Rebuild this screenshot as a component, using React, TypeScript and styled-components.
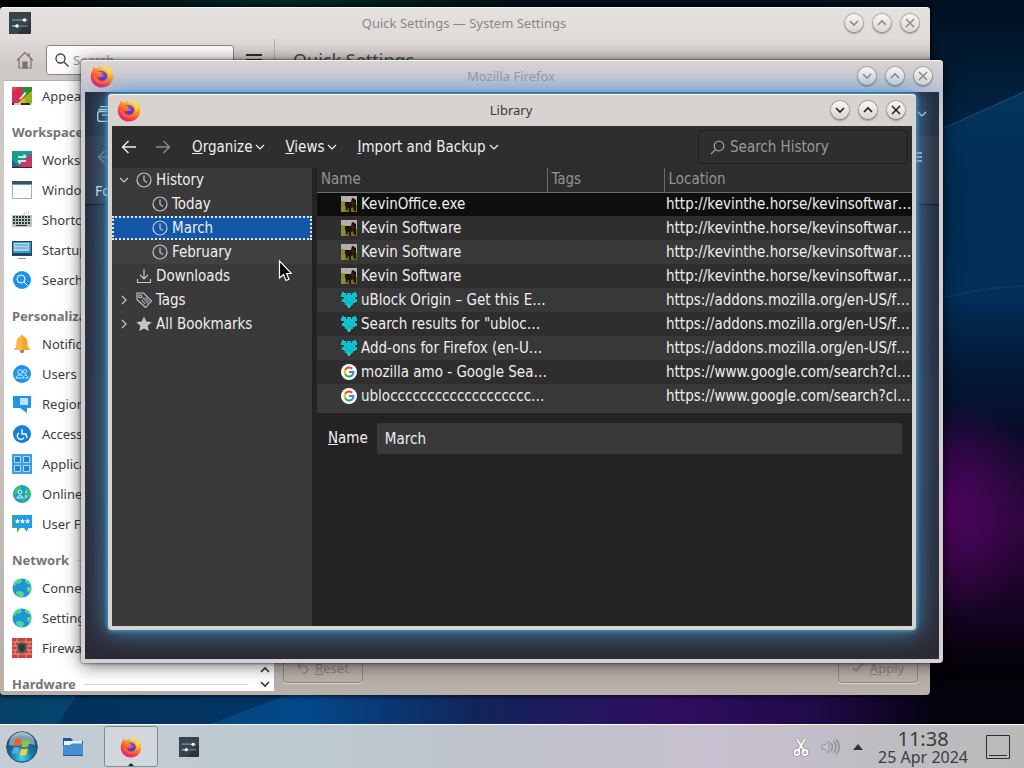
import React from 'react';
import styled, { createGlobalStyle } from 'styled-components';

const GlobalStyle = createGlobalStyle`
  * {
    box-sizing: border-box;
  }

  body {
    margin: 0;
    font-family: 'Noto Sans', sans-serif;
    font-size: 13px;
    background: #000;
  }

  button,
  input {
    font: inherit;
    color: inherit;
    border: 0;
    padding: 0;
    background: none;
  }

  svg {
    display: block;
    flex: none;
  }
`;

const Desktop = styled.div`
  display: flex;
  flex-direction: column;
  min-height: 100vh;
  position: relative;
  overflow: hidden;
`;

const WallpaperSvg = styled.svg`
  position: absolute;
  inset: 0;
  width: 100%;
  height: 100%;
`;

const Workspace = styled.main`
  flex: 1;
  position: relative;
`;

/* windows */

const Frame = styled.section`
  position: absolute;
  display: flex;
  flex-direction: column;
  padding: 0 4px 4px;
  border-radius: 4px;
`;

const SettingsFrame = styled(Frame)`
  inset: 7px 94px 29px 0;
  background: linear-gradient(#e4e1de, #e0dcda 30px, #cfc9c6 60px, #cdc6c2 50%, #b8afa9);
  box-shadow: 0 0 6px #000, inset 0 1px 0 #f6f4f3;
`;

const FirefoxFrame = styled(Frame)`
  inset: 60px 81px 61px 81px;
  background: linear-gradient(#dad5d3, #d2ccd2 14px, #b9c0d6 32px, #d4d0d0 60px, #d6cfd6);
  box-shadow: 0 0 3px rgba(0, 0, 0, 0.8), 0 2px 18px rgba(0, 0, 0, 0.6), inset 0 1px 0 #f6f4f3;
`;

const LibraryFrame = styled(Frame)`
  inset: 94px 108px 94px 108px;
  background: #d6d3d0;
  box-shadow: 0 0 4px 1px #4b9bc8, 0 0 24px 3px rgba(66, 150, 205, 0.8),
    inset 0 1px 0 #fbfaf9;
`;

const TitleBar = styled.header`
  display: grid;
  grid-template-columns: 1fr auto 1fr;
  align-items: center;
  height: 32px;
  flex: none;
  padding: 0 7px 0 5px;
`;

const WindowTitle = styled.h1<{ $tone: string }>`
  margin: 0;
  font-size: 13px;
  font-weight: 400;
  line-height: 20px;
  color: ${(p) => p.$tone};
`;

const WindowButtons = styled.div`
  display: flex;
  gap: 10px;
  justify-content: flex-end;
`;

const WindowButton = styled.button<{ $active?: boolean }>`
  width: 18px;
  height: 18px;
  border-radius: 50%;
  display: flex;
  align-items: center;
  justify-content: center;
  color: ${(p) => (p.$active ? '#1d1d1d' : '#8e8a88')};
  background: linear-gradient(#f8f7f6, #d9d6d3);
  box-shadow: 0 0 1px 1px rgba(110, 105, 102, 0.5), 0 2px 2px rgba(0, 0, 0, 0.25);
`;

/* system settings */

const SettingsBody = styled.div`
  display: grid;
  grid-template-columns: 270px 1fr;
  flex: 1;
  min-height: 0;
`;

const SettingsSide = styled.div`
  display: flex;
  flex-direction: column;
  min-width: 0;
  min-height: 0;
`;

const SettingsToolbar = styled.div`
  display: flex;
  align-items: center;
  height: 42px;
  flex: none;
  padding: 0 12px;
  gap: 12px;
  border-bottom: 1px solid #b5afab;
  color: #3b3b3b;
`;

const SearchBox = styled.label`
  display: flex;
  align-items: center;
  gap: 4px;
  flex: 1;
  min-width: 0;
  height: 30px;
  padding: 0 8px;
  border: 1px solid #8b8683;
  border-radius: 3px;
  background: #fcfcfc;

  input {
    flex: 1;
    min-width: 0;
    outline: 0;
  }

  input::placeholder {
    color: #9a9896;
    opacity: 1;
  }
`;

const IconButton = styled.button`
  display: flex;
  align-items: center;
  justify-content: center;
`;

const CategoryPane = styled.div`
  display: flex;
  flex: 1;
  min-height: 0;
  background: #fff;
`;

const CategoryList = styled.nav`
  flex: 1;
  overflow: hidden;
  padding: 0 8px;
  color: #3a3d3f;

  a {
    display: flex;
    align-items: center;
    gap: 10px;
    height: 30px;
    color: inherit;
    text-decoration: none;
    white-space: nowrap;
  }
`;

const CategoryHeading = styled.h2`
  display: flex;
  align-items: center;
  gap: 8px;
  margin: 0;
  height: 34px;
  padding-top: 8px;
  font-size: 13px;
  font-weight: 700;
  color: #757575;

  &::after {
    content: '';
    flex: 1;
    height: 1px;
    background: #d9d9d9;
  }
`;

const ScrollButtons = styled.div`
  display: flex;
  flex-direction: column;
  justify-content: flex-end;
  width: 18px;
  color: #333;

  button {
    height: 14px;
    display: flex;
    align-items: center;
    justify-content: center;
  }
`;

const SettingsContent = styled.div`
  display: flex;
  flex-direction: column;
  justify-content: space-between;
  border-left: 1px solid #b5afab;

  h2 {
    margin: 0;
    padding: 7px 18px;
    font-size: 18px;
    font-weight: 400;
    line-height: 28px;
    color: #4a4a4a;
  }
`;

const SettingsActions = styled.div`
  display: flex;
  justify-content: space-between;
  padding: 8px;
`;

const ActionButton = styled.button`
  display: flex;
  align-items: center;
  justify-content: center;
  gap: 6px;
  width: 80px;
  height: 30px;
  border: 1px solid #8f8883;
  border-radius: 4px;
  box-shadow: 0 1px 0 #ddd8d4;
  color: #8d8681;
`;

/* firefox main window */

const FirefoxBody = styled.div`
  flex: 1;
  background: linear-gradient(#262b3a, #2c2f3f 60%, #2c2a33);
  color: #d4e8f4;
  font-size: 14px;
`;

const FirefoxBar = styled.div<{ $height: number; $light?: boolean }>`
  display: flex;
  align-items: center;
  justify-content: space-between;
  height: ${(p) => p.$height}px;
  padding: 0 12px;
  background: ${(p) => (p.$light ? '#31323f' : 'transparent')};

  svg:first-child {
    opacity: ${(p) => (p.$light ? 0.4 : 1)};
  }
`;

const BookmarkBar = styled(FirefoxBar)`
  padding: 0 10px;
  border-bottom: 1px solid #0c0c12;
`;

/* library */

const LibraryBody = styled.div`
  display: flex;
  flex-direction: column;
  flex: 1;
  min-height: 0;
  background: #232323;
  color: #efefef;
  font-family: 'DejaVu Sans Condensed', 'DejaVu Sans', sans-serif;
  font-size: 15px;
  line-height: 21px;
`;

const LibraryToolbar = styled.div`
  display: flex;
  align-items: center;
  height: 42px;
  flex: none;
  padding-right: 4px;
  background: #2e2e2e;
`;

const NavButton = styled(IconButton)`
  width: 34px;
  height: 34px;

  &:disabled {
    color: #8b8b8b;
  }
`;

const MenuGroup = styled.div`
  display: flex;
  flex: 1;
  padding-left: 2px;
`;

const MenuButton = styled.button`
  display: flex;
  align-items: center;
  gap: 3px;
  padding: 0 10px;
`;

const HistorySearch = styled.label`
  display: flex;
  align-items: center;
  gap: 5px;
  width: 210px;
  height: 34px;
  padding: 0 11px;
  border: 1px solid #1f1f1f;
  border-radius: 4px;
  color: #9b9b9b;

  input {
    flex: 1;
    min-width: 0;
    outline: 0;
  }

  input::placeholder {
    color: #9b9b9b;
    opacity: 1;
  }
`;

const LibraryPanes = styled.div`
  display: grid;
  grid-template-columns: 200px 1fr;
  column-gap: 5px;
  flex: 1;
  min-height: 0;
`;

const Tree = styled.ul`
  margin: 0;
  padding: 0;
  list-style: none;
  background: #3a3a3a;
`;

const TreeRow = styled.li<{ $depth: number; $selected?: boolean; $hover?: boolean }>`
  display: flex;
  align-items: center;
  gap: 4px;
  height: 24px;
  padding-left: ${(p) => 4 + p.$depth * 16}px;
  background: ${(p) => (p.$selected ? '#1457a8' : p.$hover ? '#414141' : 'none')};
  outline: ${(p) => (p.$selected ? '2px dotted #e8e8e0' : 'none')};
  outline-offset: -2px;

  svg {
    color: #c6c6c6;
  }
`;

const Twisty = styled.span`
  display: flex;
  justify-content: center;
  width: 16px;
`;

const ResultPane = styled.div`
  min-width: 0;
`;

const TableWrap = styled.div`
  padding-bottom: 5px;
  background: #383838;
`;

const ResultTable = styled.table`
  width: 100%;
  table-layout: fixed;
  border-collapse: collapse;

  th {
    height: 24px;
    padding: 0 4px;
    text-align: left;
    font-weight: 400;
    color: #949494;
    background: #2d2d2d;
    border-bottom: 1px solid #6a6a6a;
  }

  th + th {
    border-left: 1px solid #6a6a6a;
  }

  td {
    height: 24px;
    padding: 0 0 0 2px;
    white-space: nowrap;
    overflow: hidden;
  }

  tbody tr:nth-child(odd) {
    background: #383838;
  }

  tbody tr:nth-child(even) {
    background: #2e2e2e;
  }

  tbody tr:first-child {
    background: #0e0e0e;
  }
`;

const SiteCell = styled.div`
  display: flex;
  align-items: center;
  gap: 4px;
  padding-left: 22px;
`;

const DetailRow = styled.div`
  display: flex;
  align-items: center;
  gap: 9px;
  padding: 10px 10px 0 11px;

  input {
    flex: 1;
    height: 31px;
    padding: 0 8px;
    border-radius: 2px;
    background: #393939;
  }
`;

/* panel */

const Panel = styled.footer`
  position: relative;
  display: flex;
  align-items: center;
  justify-content: space-between;
  height: 44px;
  padding: 0 14px 0 6px;
  border-top: 1px solid #fff;
  background: linear-gradient(90deg, #c6ccd4, #bccad2 28%, #bfc2cd 50%, #c8c0d0 70%, #bdbcc0 88%, #bababa);
  color: #3b3b40;
`;

const Launchers = styled.div`
  display: flex;
  align-items: center;
  gap: 5px;
`;

const TaskButton = styled.button<{ $active?: boolean }>`
  display: flex;
  align-items: center;
  justify-content: center;
  width: ${(p) => (p.$active ? 54 : 52)}px;
  height: 41px;
  border: ${(p) => (p.$active ? '1px solid #858c93' : '0')};
  border-radius: 3px;
  background: ${(p) => (p.$active ? 'rgba(225, 228, 230, 0.5)' : 'none')};
  position: relative;
`;

const StartButton = styled(IconButton)`
  width: 32px;
  margin-right: 4px;
`;

const ActiveMark = styled.span`
  position: absolute;
  bottom: 0;
  border: 3px solid transparent;
  border-bottom-color: #222;
  border-top: 0;
`;

const Tray = styled.div`
  display: flex;
  align-items: center;
  gap: 10px;
`;

const Clock = styled.time`
  display: flex;
  flex-direction: column;
  align-items: center;
  padding: 2px 8px 0 3px;
  font-size: 16px;
  line-height: 18px;

  b {
    font-size: 20px;
    font-weight: 400;
  }
`;

const Pointer = styled.svg`
  position: absolute;
  left: 278px;
  top: 259px;
`;

/* drawings */

const Wallpaper = () => (
  <WallpaperSvg viewBox="0 0 1024 768" preserveAspectRatio="none" aria-hidden="true">
    <defs>
      <linearGradient id="wpBottom">
        <stop offset="0" stopColor="#064268" />
        <stop offset=".3" stopColor="#04488a" />
        <stop offset=".47" stopColor="#12245a" />
        <stop offset=".65" stopColor="#300e62" />
        <stop offset=".8" stopColor="#200a48" />
        <stop offset=".92" stopColor="#04020c" />
      </linearGradient>
      <linearGradient id="wpSide" x2="0" y2="1">
        <stop offset="0" stopColor="#00101f" />
        <stop offset=".16" stopColor="#022342" />
        <stop offset=".38" stopColor="#02305a" />
        <stop offset=".48" stopColor="#021a36" />
        <stop offset=".56" stopColor="#0a0c2a" />
        <stop offset=".68" stopColor="#2a0638" />
        <stop offset=".8" stopColor="#140420" />
        <stop offset=".88" stopColor="#020106" />
      </linearGradient>
      <radialGradient id="wpPurple">
        <stop offset="0" stopColor="#4e0560" />
        <stop offset="1" stopColor="#4e0560" stopOpacity="0" />
      </radialGradient>
      <linearGradient id="wpTop">
        <stop offset="0" stopColor="#000" />
        <stop offset=".28" stopColor="#002a28" />
        <stop offset=".5" stopColor="#001018" />
        <stop offset="1" stopColor="#00101f" />
      </linearGradient>
      <linearGradient id="wpBeam" x2="0" y2="1">
        <stop offset="0" stopColor="#02365f" />
        <stop offset="1" stopColor="#02305a" stopOpacity="0" />
      </linearGradient>
    </defs>
    <rect width="1024" height="768" fill="#000" />
    <rect width="1024" height="20" fill="url(#wpTop)" />
    <rect x="900" width="124" height="768" fill="url(#wpSide)" />
    <path d="M900 150 1024 92V300H900Z" fill="url(#wpBeam)" />
    <path d="M940 130 1024 92" stroke="#1c5480" strokeWidth="1" />
    <path d="M940 299Q980 288 1024 286" stroke="#0a3a60" strokeWidth="2" fill="none" />
    <ellipse cx="950" cy="510" rx="90" ry="110" fill="url(#wpPurple)" />
    <rect y="680" width="1024" height="60" fill="url(#wpBottom)" />
    <path d="M58 724 80 690H300L210 724Z" fill="#02284e" opacity=".6" />
  </WallpaperSvg>
);

const FirefoxLogo = ({ size }: { size: number }) => (
  <svg width={size} height={size} viewBox="0 0 24 24" aria-hidden="true">
    <defs>
      <linearGradient id="fxBody" x1=".8" y1=".05" x2=".25" y2="1">
        <stop offset="0" stopColor="#fff24a" />
        <stop offset=".35" stopColor="#ffa022" />
        <stop offset=".65" stopColor="#fb4a3a" />
        <stop offset="1" stopColor="#e31587" />
      </linearGradient>
      <radialGradient id="fxCore" cx=".5" cy=".35">
        <stop offset="0" stopColor="#a34cf0" />
        <stop offset="1" stopColor="#4a3ac8" />
      </radialGradient>
    </defs>
    <path
      d="M12 23.5C5.600 23.500.8 18.800.8 12.400.8 9.600 1.600 7.500 3 5.400c0-1.200.1-2.200.6-3 .5 1 1 1.500 1.700 1.900 1-.1 1.700 0 2.600.2C8.700 3 9.800 2.200 11 2c-.6 1-.7 1.800-.5 2.500 2 .1 3.300.8 4.600 1.900C15.500 4 14.700 2 13.800.5c3.700 1.200 5.400 3.300 6.200 5.800.4-.2.500-.7.500-1.200 1.900 2.300 2.800 4.800 2.700 7.700-.2 6.200-5 10.700-11.200 10.700Z"
      fill="url(#fxBody)"
    />
    <path
      d="M8 8c2-1.200 4.700-1.200 6.700-.1 1.800 1 2.700 2.900 2.400 4.800-.4 2.400-2.400 4-4.800 3.900-2.500-.1-4.200-1.700-4.400-3.900 1 .7 2.300.7 3.300.2.800-.5 1.700-.9 2.500-.8-.3-.9-1.300-1.200-2.700-1.200-.5-1.300.2-1.900 1.100-2.500-1.500-.5-2.800-.5-4.100-.4Z"
      fill="url(#fxCore)"
    />
    <path d="M4 11.500c1.200 5 4.300 7.300 8.500 7.200 3.500-.1 6-2 6.800-5.700" stroke="#ff8a2a" strokeWidth="1.500" fill="none" opacity=".7" />
    <path d="M15.500 6.500c3 2 4 5 3 8.500 3-3.500 2.500-7.500.5-10.500Z" fill="#ffe14a" opacity=".8" />
  </svg>
);

const SlidersIcon = ({ size }: { size: number }) => (
  <svg width={size} height={size} viewBox="0 0 22 22" aria-hidden="true">
    <rect width="22" height="22" rx="1" fill="#2b333a" />
    <path d="M0 0h22v8L8 22H0Z" fill="#39434b" />
    <path d="M3 8h16M3 14h16" stroke="#59748a" strokeWidth="1.500" />
    <path d="M3 14h5" stroke="#6fb8ea" strokeWidth="1.500" />
    <path d="M3 8h12" stroke="#6d7f8c" strokeWidth="1.500" />
    <circle cx="15.500" cy="8" r="1.800" fill="#fff" />
    <circle cx="8" cy="14" r="1.800" fill="#fff" />
  </svg>
);

const Chevron = ({ dir = 'down', size = 10, width = 1.2 }: { dir?: 'down' | 'up' | 'right'; size?: number; width?: number }) => {
  const paths = { down: 'M1 3l4 4 4-4', up: 'M1 7l4-4 4 4', right: 'M3 1l4 4-4 4' };
  return (
    <svg width={size} height={size} viewBox="0 0 10 10" fill="none" stroke="currentColor" strokeWidth={width}>
      <path d={paths[dir]} />
    </svg>
  );
};

const CloseIcon = () => (
  <svg width="10" height="10" viewBox="0 0 10 10" stroke="currentColor" strokeWidth="1.500">
    <path d="M1 1l8 8M9 1L1 9" />
  </svg>
);

const ArrowIcon = ({ flip }: { flip?: boolean }) => (
  <svg width="16" height="16" viewBox="0 0 16 16" fill="none" stroke="currentColor" strokeWidth="1.400">
    <path d={flip ? 'M1 8h13.500M8.500 2l6 6-6 6' : 'M15 8H1.500M7.500 2l-6 6 6 6'} />
  </svg>
);

const ClockIcon = () => (
  <svg width="16" height="16" viewBox="0 0 16 16" fill="none" stroke="currentColor" strokeWidth="1.200">
    <circle cx="8" cy="8" r="7" />
    <path d="M8 3.500V8.500l3 2" />
  </svg>
);

const DownloadIcon = () => (
  <svg width="16" height="16" viewBox="0 0 16 16" fill="none" stroke="currentColor" strokeWidth="1.200">
    <path d="M8 1v10M4 7l4 4 4-4M1.500 11v3.500h13V11" />
  </svg>
);

const TagIcon = () => (
  <svg width="16" height="16" viewBox="0 0 16 16" fill="none" stroke="currentColor" strokeWidth="1.100">
    <path d="M1 1h6.500l8 8-6 6.500L1 7.500Z" />
    <circle cx="4.200" cy="4.200" r="1.500" />
    <path d="M6.500 5.500l6 6M5.500 8l4 4M9 5.500l4 4" opacity=".7" />
  </svg>
);

const StarIcon = () => (
  <svg width="16" height="16" viewBox="0 0 16 16" fill="currentColor">
    <path d="M8 .5l2.300 4.900 5.400.7-4 3.700 1 5.300L8 12.500l-4.700 2.600 1-5.300-4-3.700 5.400-.7Z" />
  </svg>
);

const KevinIcon = () => (
  <svg width="16" height="16" viewBox="0 0 16 16">
    <rect width="16" height="16" fill="#b5aeb0" />
    <path d="M0 9h16v7H0Z" fill="#74731a" />
    <path d="M0 5h4v11H0Z" fill="#8d8a3a" />
    <path d="M4 6h6l1-4h1l3 2v11h-2l-1-4-2 1v4H8v-4H7v2H5v-3L4 10Z" fill="#1f1108" />
    <path d="M11 5h2v5h-2Z" fill="#3a1e0e" />
  </svg>
);

const AmoIcon = () => (
  <svg width="16" height="16" viewBox="0 0 16 16" fill="#0bc3d1">
    <path d="M1 0h2v1h2v2h1V1h4v2h1V1h2V0h2v2h1v3h-2v2h2v3h-2v1h-2v2h-2v2H9v1H7v-1H6v-2H4v-2H3v-1H1V7h2V5H0V2h1Z" />
    <path d="M4 7h1v1H4ZM11 7h1v1h-1ZM6 10h1v1H6ZM9 10h1v1H9Z" fill="#1b8a8c" />
    <path d="M7 12h2v4H7Z" fill="#19d9a0" />
  </svg>
);

const GoogleIcon = () => (
  <svg width="16" height="16" viewBox="0 0 16 16" fill="none" strokeWidth="2.100">
    <circle cx="8" cy="8" r="8" fill="#fff" />
    <path d="M11.200 4.800A4.400 4.400 0 0 0 4.200 5.800" stroke="#ea4335" />
    <path d="M4.200 5.800a4.400 4.400 0 0 0 0 4.400" stroke="#fbbc05" />
    <path d="M4.200 10.200a4.400 4.400 0 0 0 6.800 1.200" stroke="#34a853" />
    <path d="M11 11.400A4.400 4.400 0 0 0 12.400 8H8" stroke="#4285f4" />
  </svg>
);

const categoryDrawings: Record<string, React.ReactNode> = {
  appearance: (
    <>
      <path d="M0 1h20v16H0Z" fill="#d92a55" />
      <path d="M0 1h6l-6 6Z" fill="#e0484a" />
      <path d="M10 1h10v9H10Z" fill="#2c8a3c" />
      <path d="M20 5v12H6Z" fill="#e8b800" />
      <path d="M13 10l7-3v10h-7Z" fill="#8fb51c" />
      <path d="M0 17h20v2H0Z" fill="#c9cbcc" />
      <path d="M0 17h2v2H0ZM9 17h9v2H9Z" fill="#2a2d30" />
      <path d="M7 13l6-7 1.500 1L9 13.500Z" fill="#fff" />
    </>
  ),
  workspace: (
    <>
      <path d="M0 1h20v16H0Z" fill="#159e8c" />
      <path d="M20 3v14H5Z" fill="#c9356c" />
      <path d="M0 10l8 7H0Z" fill="#2a5f8c" />
      <path d="M0 17h20v1H0Z" fill="#2a2d30" />
      <path d="M6 7h8M11.500 4.500 14 7M14 11H6M8.500 13.500 6 11" stroke="#fff" strokeWidth="1.300" />
    </>
  ),
  window: (
    <>
      <path d="M.5 1.500h19v17H.5Z" fill="#fcfcfc" stroke="#a8abae" />
      <path d="M0 1h20v3H0Z" fill="#475057" />
      <path d="M0 4h20v1H0Z" fill="#3daee9" />
    </>
  ),
  keyboard: (
    <>
      <path d="M0 5h20v12H0Z" fill="#b9c4bc" />
      <path d="M1 7h18M1 10h18M1 13h18" stroke="#2c3a36" strokeWidth="2" strokeDasharray="2 1" />
      <path d="M4 15.500h11" stroke="#2c3a36" />
      <path d="M12 5V3h6" stroke="#9aa29c" strokeDasharray="1 1" />
    </>
  ),
  startup: (
    <>
      <path d="M0 1h20v15H0Z" fill="#27445a" />
      <path d="M1 2h18v11H1Z" fill="#2f9fd4" />
      <path d="M2 3h15v8H2Z" fill="#a9d6ec" />
      <path d="M3 5h13M3 8h13" stroke="#5d95b3" />
      <path d="M6 18h8v1H6Z" fill="#8e9499" />
    </>
  ),
  search: (
    <>
      <circle cx="10" cy="10" r="9" fill="#1e93e8" />
      <circle cx="9" cy="9" r="4" stroke="#fff" />
      <path d="M12 12l4 4" stroke="#fff" />
    </>
  ),
  bell: (
    <>
      <circle cx="10" cy="17" r="2.200" fill="#9a8b78" />
      <path d="M10 1c1 0 1.500.8 1.500 1.600C15 4 15.500 7 15.500 10c0 3 1 4.500 3 6H1.500c2-1.500 3-3 3-6 0-3 .5-6 4-7.400C8.500 1.800 9 1 10 1Z" fill="#f5a623" />
      <path d="M10 3v13H2c2-1 3-3 3-6s1-7 5-7Z" fill="#fbb848" />
    </>
  ),
  users: (
    <>
      <circle cx="10" cy="10" r="9" fill="#1e93e8" />
      <circle cx="8" cy="8" r="2.300" stroke="#d5ecfc" />
      <circle cx="13" cy="7.500" r="1.800" stroke="#d5ecfc" />
      <path d="M4 14c0-4 8-4 8 0ZM12.500 11c2 0 3.500 1 3.500 3h-3" stroke="#d5ecfc" />
    </>
  ),
  region: (
    <>
      <path d="M1 2h18v12h-4v5l-7-5H1Z" fill="#2196e3" />
      <path d="M8 4h8v7H8Z" fill="#bfe2fa" />
    </>
  ),
  access: (
    <>
      <circle cx="10" cy="10" r="9" fill="#1680da" />
      <path d="M10 5v5h4l1 4M7 9a3.500 3.500 0 1 0 5 4.500" stroke="#fff" strokeWidth="1.300" />
    </>
  ),
  apps: (
    <>
      <path d="M0 0h20v20H0Z" fill="#37a0e6" />
      <path d="M2.500 2.500h6v6h-6ZM11.500 2.500h6v6h-6ZM2.500 11.500h6v6h-6ZM11.500 11.500h6v6h-6Z" stroke="#aadcfa" fill="#2483c9" />
    </>
  ),
  online: (
    <>
      <circle cx="10" cy="10" r="9" fill="#1c9bc8" />
      <path d="M2 6c3-4 6-4 8-4l-3 5-4 4ZM13 3c4 2 6 5 5.500 9L15 14l-4 4c-2-2 2-6 2-8Z" fill="#36c275" />
      <circle cx="8" cy="8" r="2" stroke="#e3f7ff" />
      <path d="M5 14c0-3 6-3 6 0ZM14 7v2M14 11v3" stroke="#e3f7ff" />
    </>
  ),
  feedback: (
    <>
      <path d="M0 1h8v13l-3 5v-5H0Z" fill="#5ab52c" />
      <path d="M1 1h19v13h-4l-1 4-3-4H1Z" fill="#1ea0e6" />
      <path d="M5.500 4.500l.8 1.700 1.700.3-1.200 1.200.3 1.800-1.600-.9-1.600.9.300-1.800L3 6.500l1.700-.3ZM10.500 4.500l.8 1.700 1.700.3-1.200 1.200.3 1.800-1.600-.9-1.600.9.300-1.800L8 6.500l1.700-.3ZM15.500 4.500l.8 1.700 1.700.3-1.200 1.200.3 1.800-1.600-.9-1.600.9.300-1.800L13 6.500l1.700-.3Z" fill="#fff" />
    </>
  ),
  globe: (
    <>
      <circle cx="10" cy="10" r="9.500" fill="#1f95d6" />
      <path d="M1 7c1-3 4-6 7-6.500L10 3 7 6 5 5 3 8ZM13 1c3 1 5 3 6 6l-3-1-3-2ZM4 14c3-2 6-1 8 1l-1 4c-4 .5-7-2-7-5ZM15 9l4.500 0c0 3-1 5-2.500 6l-2-3Z" fill="#52d694" />
    </>
  ),
  firewall: (
    <>
      <path d="M0 0h20v20H0Z" fill="#c9453c" />
      <path d="M0 4h20M0 8h20M0 12h20M0 16h20M5 0v4M14 0v4M3 4v4M17 4v4M5 8v4M15 8v4M3 12v4M17 12v4M6 16v4M14 16v4" stroke="#e39a8e" />
      <path d="M10 4l5 2v4c0 3-2 5-5 6-3-1-5-3-5-6V6Z" fill="#5b5d5a" />
      <path d="M10 6l3 1v3c0 2-1 3-3 4-2-1-3-2-3-4V7Z" fill="#233b3c" />
    </>
  ),
};

const CategoryIcon = ({ name }: { name: string }) => (
  <svg width="20" height="20" viewBox="0 0 20 20" fill="none" aria-hidden="true">
    {categoryDrawings[name]}
  </svg>
);

/* data */

const categories = [
  { items: [['appearance', 'Appearance']] },
  {
    title: 'Workspace',
    items: [
      ['workspace', 'Workspace'],
      ['window', 'Windows'],
      ['keyboard', 'Shortcuts'],
      ['startup', 'Startup'],
      ['search', 'Search'],
    ],
  },
  {
    title: 'Personalization',
    items: [
      ['bell', 'Notifications'],
      ['users', 'Users'],
      ['region', 'Regional'],
      ['access', 'Accessibility'],
      ['apps', 'Applications'],
      ['online', 'Online'],
      ['feedback', 'User Feedback'],
    ],
  },
  {
    title: 'Network',
    items: [
      ['globe', 'Connections'],
      ['globe', 'Settings'],
      ['firewall', 'Firewall'],
    ],
  },
  { title: 'Hardware', items: [] },
];

const tree = [
  { label: 'History', icon: <ClockIcon />, depth: 0, twisty: 'down' as const },
  { label: 'Today', icon: <ClockIcon />, depth: 1 },
  { label: 'March', icon: <ClockIcon />, depth: 1, selected: true },
  { label: 'February', icon: <ClockIcon />, depth: 1, hover: true },
  { label: 'Downloads', icon: <DownloadIcon />, depth: 0 },
  { label: 'Tags', icon: <TagIcon />, depth: 0, twisty: 'right' as const },
  { label: 'All Bookmarks', icon: <StarIcon />, depth: 0, twisty: 'right' as const },
];

const results = [
  { icon: <KevinIcon />, name: 'KevinOffice.exe', url: 'http://kevinthe.horse/kevinsoftwar…' },
  { icon: <KevinIcon />, name: 'Kevin Software', url: 'http://kevinthe.horse/kevinsoftwar…' },
  { icon: <KevinIcon />, name: 'Kevin Software', url: 'http://kevinthe.horse/kevinsoftwar…' },
  { icon: <KevinIcon />, name: 'Kevin Software', url: 'http://kevinthe.horse/kevinsoftwar…' },
  { icon: <AmoIcon />, name: 'uBlock Origin – Get this E…', url: 'https://addons.mozilla.org/en-US/f…' },
  { icon: <AmoIcon />, name: 'Search results for "ubloc…', url: 'https://addons.mozilla.org/en-US/f…' },
  { icon: <AmoIcon />, name: 'Add-ons for Firefox (en-U…', url: 'https://addons.mozilla.org/en-US/f…' },
  { icon: <GoogleIcon />, name: 'mozilla amo - Google Sea…', url: 'https://www.google.com/search?cl…' },
  { icon: <GoogleIcon />, name: 'ublo' + 'c'.repeat(19) + '…', url: 'https://www.google.com/search?cl…' },
];

const Controls = ({ active }: { active?: boolean }) => (
  <WindowButtons>
    <WindowButton $active={active} aria-label="Minimize">
      <Chevron width={1.6} />
    </WindowButton>
    <WindowButton $active={active} aria-label="Maximize">
      <Chevron dir="up" width={1.6} />
    </WindowButton>
    <WindowButton $active={active} aria-label="Close">
      <CloseIcon />
    </WindowButton>
  </WindowButtons>
);

const SettingsWindow = () => (
  <SettingsFrame>
    <TitleBar>
      <SlidersIcon size={22} />
      <WindowTitle $tone="#8b8785">Quick Settings — System Settings</WindowTitle>
      <Controls />
    </TitleBar>
    <SettingsBody>
      <SettingsSide>
        <SettingsToolbar>
          <IconButton aria-label="Home">
            <svg width="18" height="18" viewBox="0 0 18 18" fill="none" stroke="#77716d" strokeWidth="1.200">
              <path d="M1 9.500 9 1.500l8 8M3 8v9h12V8M13 2v3" />
              <path d="M7 11h4v6H7Z" fill="#77716d" />
            </svg>
          </IconButton>
          <SearchBox>
            <svg width="14" height="14" viewBox="0 0 14 14" fill="none" stroke="#3b3b3b" strokeWidth="1.300">
              <circle cx="5.500" cy="5.500" r="4.500" />
              <path d="M9 9l4.500 4.500" />
            </svg>
            <input placeholder="Search..." aria-label="Search settings" />
          </SearchBox>
          <IconButton aria-label="Menu">
            <svg width="16" height="16" viewBox="0 0 16 16" stroke="#2c2c2c" strokeWidth="2">
              <path d="M0 3h16M0 8h16M0 13h16" />
            </svg>
          </IconButton>
        </SettingsToolbar>
        <CategoryPane>
          <CategoryList>
            {categories.map((group, i) => (
              <React.Fragment key={i}>
                {group.title && <CategoryHeading>{group.title}</CategoryHeading>}
                {group.items.map(([icon, label]) => (
                  <a href="#" key={label}>
                    <CategoryIcon name={icon} />
                    {label}
                  </a>
                ))}
              </React.Fragment>
            ))}
          </CategoryList>
          <ScrollButtons>
            <button aria-label="Scroll up">
              <Chevron dir="up" width={1.6} />
            </button>
            <button aria-label="Scroll down">
              <Chevron width={1.6} />
            </button>
          </ScrollButtons>
        </CategoryPane>
      </SettingsSide>
      <SettingsContent>
        <h2>Quick Settings</h2>
        <SettingsActions>
          <ActionButton disabled>
            <svg width="12" height="12" viewBox="0 0 12 12" fill="none" stroke="currentColor" strokeWidth="1.200">
              <path d="M4 1 1 4l3 3M1 4h6a3.500 3.500 0 0 1 0 7H5" />
            </svg>
            <span>
              <u>R</u>eset
            </span>
          </ActionButton>
          <ActionButton disabled>
            <svg width="12" height="12" viewBox="0 0 12 12" fill="none" stroke="currentColor" strokeWidth="1.500">
              <path d="M1 6l3 3 7-8" />
            </svg>
            <span>
              <u>A</u>pply
            </span>
          </ActionButton>
        </SettingsActions>
      </SettingsContent>
    </SettingsBody>
  </SettingsFrame>
);

const FirefoxWindow = () => (
  <FirefoxFrame>
    <TitleBar>
      <FirefoxLogo size={24} />
      <WindowTitle $tone="#9c999c">Mozilla Firefox</WindowTitle>
      <Controls />
    </TitleBar>
    <FirefoxBody>
      <FirefoxBar $height={44}>
        <svg width="16" height="16" viewBox="0 0 16 16" fill="none" stroke="currentColor" strokeWidth="1.300">
          <path d="M3 .7h10M1.500 3.500h13" />
          <rect x=".8" y="5.500" width="14.400" height="10" rx="2" />
          <path d="M5 9h6" />
        </svg>
        <Chevron />
      </FirefoxBar>
      <FirefoxBar $height={41} $light>
        <ArrowIcon />
        <svg width="16" height="16" viewBox="0 0 16 16" stroke="currentColor" strokeWidth="1.300">
          <path d="M0 4h11M0 8h11M0 12h11" />
        </svg>
      </FirefoxBar>
      <BookmarkBar $height={28} $light>
        For quick access
      </BookmarkBar>
    </FirefoxBody>
  </FirefoxFrame>
);

const LibraryWindow = () => (
  <LibraryFrame>
    <TitleBar>
      <FirefoxLogo size={24} />
      <WindowTitle $tone="#3a3a3a">Library</WindowTitle>
      <Controls active />
    </TitleBar>
    <LibraryBody>
      <LibraryToolbar>
        <NavButton aria-label="Back">
          <ArrowIcon />
        </NavButton>
        <NavButton aria-label="Forward" disabled>
          <ArrowIcon flip />
        </NavButton>
        <MenuGroup>
          <MenuButton>
            <span>
              <u>O</u>rganize
            </span>
            <Chevron />
          </MenuButton>
          <MenuButton>
            <span>
              <u>V</u>iews
            </span>
            <Chevron />
          </MenuButton>
          <MenuButton>
            <span>
              <u>I</u>mport and Backup
            </span>
            <Chevron />
          </MenuButton>
        </MenuGroup>
        <HistorySearch>
          <svg width="15" height="15" viewBox="0 0 15 15" fill="none" stroke="currentColor" strokeWidth="1.300">
            <circle cx="9" cy="6" r="4.800" />
            <path d="M5.500 9.500 1 14" />
          </svg>
          <input placeholder="Search History" aria-label="Search History" />
        </HistorySearch>
      </LibraryToolbar>
      <LibraryPanes>
        <Tree>
          {tree.map((row) => (
            <TreeRow key={row.label} $depth={row.depth} $selected={row.selected} $hover={row.hover}>
              <Twisty>{row.twisty && <Chevron dir={row.twisty} />}</Twisty>
              {row.icon}
              {row.label}
            </TreeRow>
          ))}
        </Tree>
        <ResultPane>
          <TableWrap>
            <ResultTable>
              <colgroup>
                <col width="230" />
                <col width="117" />
                <col />
              </colgroup>
              <thead>
                <tr>
                  <th>Name</th>
                  <th>Tags</th>
                  <th>Location</th>
                </tr>
              </thead>
              <tbody>
                {results.map((row, i) => (
                  <tr key={i}>
                    <td>
                      <SiteCell>
                        {row.icon}
                        {row.name}
                      </SiteCell>
                    </td>
                    <td />
                    <td>{row.url}</td>
                  </tr>
                ))}
              </tbody>
            </ResultTable>
          </TableWrap>
          <DetailRow>
            <label htmlFor="item-name">
              <u>N</u>ame
            </label>
            <input id="item-name" defaultValue="March" />
          </DetailRow>
        </ResultPane>
      </LibraryPanes>
    </LibraryBody>
  </LibraryFrame>
);

const TaskPanel = () => (
  <Panel>
    <Launchers>
      <StartButton aria-label="Start">
        <svg width="32" height="32" viewBox="0 0 32 32">
          <defs>
            <radialGradient id="orb" cx=".5" cy=".85" r=".9">
              <stop offset="0" stopColor="#3fd8f0" />
              <stop offset=".4" stopColor="#1672ac" />
              <stop offset=".75" stopColor="#24506e" />
              <stop offset="1" stopColor="#b8ccd8" />
            </radialGradient>
          </defs>
          <circle cx="16" cy="16" r="15.300" fill="url(#orb)" stroke="#1f4a66" />
          <path d="M3 14a13 13 0 0 1 26 0c-8-3-18 2-26 0Z" fill="#d8e8f0" opacity=".5" />
          <path d="M9 8.500c2.500-1.500 4.500-1.300 6.500-.2l-1.500 7c-2-1.200-4-1.200-6.500 0Z" fill="#e8622a" />
          <path d="M16.800 9c2.500 1.200 4.500 1 7-.2l-1.500 6.800c-2.500 1.200-4.500 1.300-7 .2Z" fill="#8cc63f" />
          <path d="M7.200 16.800c2.500-1.200 4.500-1.200 6.500 0l-1.500 6.500c-2-1.200-4-1-6.300 0Z" fill="#4ab0ea" />
          <path d="M15 17.500c2.500 1.200 4.500 1 7-.2l-1.500 6.500c-2.500 1.200-4.500 1.300-7 .2Z" fill="#fccb3a" />
        </svg>
      </StartButton>
      <TaskButton aria-label="Files">
        <svg width="22" height="22" viewBox="0 0 22 22">
          <path d="M1 2h8l2 3h10v6H1Z" fill="#20588c" />
          <path d="M2 5h18v5H2Z" fill="#e6f2fa" />
          <path d="M1 9h7l2-1.500h11V20H1Z" fill="#4490d2" />
          <path d="M1 19h20v1H1Z" fill="#225c96" />
        </svg>
      </TaskButton>
      <TaskButton $active aria-label="Firefox">
        <FirefoxLogo size={22} />
        <ActiveMark />
      </TaskButton>
      <TaskButton aria-label="System Settings">
        <SlidersIcon size={20} />
      </TaskButton>
    </Launchers>
    <Tray>
      <IconButton aria-label="Clipboard">
        <svg width="20" height="20" viewBox="0 0 20 20" fill="none">
          <g stroke="#8d8a90" strokeWidth="3">
            <path d="M6 2l6.500 11M14 2 7.500 13" />
            <circle cx="6" cy="15.500" r="2.500" />
            <circle cx="14" cy="15.500" r="2.500" />
          </g>
          <g stroke="#fff" strokeWidth="1.800">
            <path d="M6 2l6.500 11M14 2 7.500 13" />
            <circle cx="6" cy="15.500" r="2.500" />
            <circle cx="14" cy="15.500" r="2.500" />
          </g>
        </svg>
      </IconButton>
      <IconButton aria-label="Volume">
        <svg width="20" height="20" viewBox="0 0 20 20" fill="none" stroke="#959198">
          <path d="M1 8h3l4-4v12l-4-4H1Z" fill="#c9c6cc" />
          <path d="M10 6q3 4 0 8M12.500 4q5 6 0 12M15 2q6.500 8 0 16" strokeWidth="1.500" />
        </svg>
      </IconButton>
      <IconButton aria-label="Show hidden icons">
        <svg width="14" height="8" viewBox="0 0 14 8">
          <path d="M2 7 7 1l5 6Z" fill="#333338" />
        </svg>
      </IconButton>
      <Clock>
        <b>11:38</b>
        25 Apr 2024
      </Clock>
      <IconButton aria-label="Show desktop">
        <svg width="24" height="24" viewBox="0 0 24 24" fill="none" stroke="#2e2e32">
          <path d="M.5.500h23v23H.5ZM3 20.500h18" />
        </svg>
      </IconButton>
    </Tray>
  </Panel>
);

export default function App() {
  return (
    <Desktop>
      <GlobalStyle />
      <Wallpaper />
      <Workspace>
        <SettingsWindow />
        <FirefoxWindow />
        <LibraryWindow />
      </Workspace>
      <TaskPanel />
      <Pointer width="14" height="24" viewBox="0 0 14 24" aria-hidden="true">
        <path d="M1.500 2v17l4-3.500 2.500 6 3-1.300-2.500-5.700h5Z" fill="#000" stroke="#fff" strokeWidth="1.200" />
      </Pointer>
    </Desktop>
  );
}
